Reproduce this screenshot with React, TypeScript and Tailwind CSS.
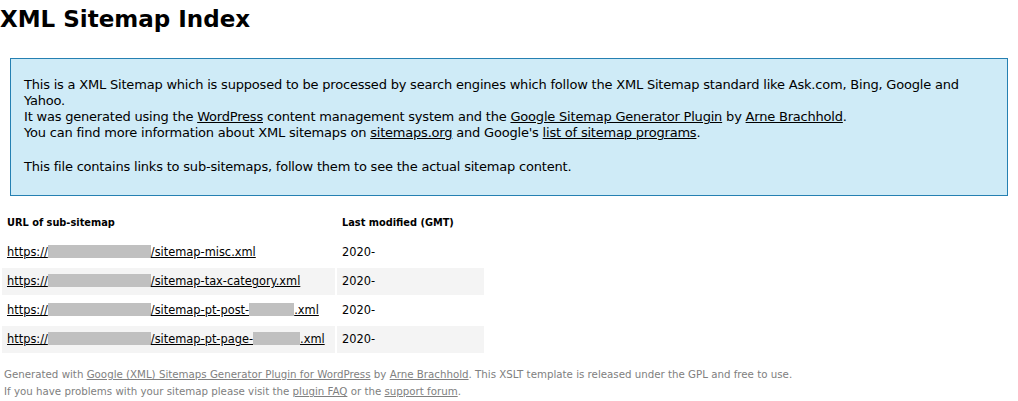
const rows = [
  { mid: '/sitemap-misc.xml', tail: null as null | number, end: '', date: '2020-' },
  { mid: '/sitemap-tax-category.xml', tail: null, end: '', date: '2020-' },
  { mid: '/sitemap-pt-post-', tail: 45, end: '.xml', date: '2020-' },
  { mid: '/sitemap-pt-page-', tail: 47, end: '.xml', date: '2020-' },
];

function Blur({ w }: { w: number }) {
  return <span className="inline-block h-[13px] bg-[#c0c0c0] align-[-2px]" style={{ width: w }} />;
}

export default function App() {
  return (
    <div className="min-h-screen bg-white text-black font-['DejaVu_Sans',sans-serif]">
      <h1 className="text-[23px] font-bold leading-[38px] m-0">XML Sitemap Index</h1>

      {/* Intro box */}
      <div className="mx-[10px] mt-[20px] border border-[#2580B2] bg-[#CFEBF7] px-[13px] py-[5px] text-[13px] tracking-[-0.2px]">
        <p className="mt-[13px] mb-[14px] leading-[16px]">
          This is a XML Sitemap which is supposed to be processed by search engines which follow the XML Sitemap
          standard like Ask.com, Bing, Google and Yahoo.
          <br />
          It was generated using the <a href="#" className="underline">WordPress</a> content management system and the{' '}
          <a href="#" className="underline">Google Sitemap Generator Plugin</a> by{' '}
          <a href="#" className="underline">Arne Brachhold</a>.
          <br />
          You can find more information about XML sitemaps on <a href="#" className="underline">sitemaps.org</a> and
          Google's <a href="#" className="underline">list of sitemap programs</a>.
        </p>
        <p className="mt-[18px] mb-[15px] leading-[16px]">
          This file contains links to sub-sitemaps, follow them to see the actual sitemap content.
        </p>
      </div>

      {/* Sub-sitemap table */}
      <table className="mt-[12px] border-separate border-spacing-[2px] text-[11.4px]">
        <thead>
          <tr className="h-[27px]">
            <th className="w-[333px] px-[5px] text-left text-[9.8px] font-bold">URL of sub-sitemap</th>
            <th className="pl-[5px] pr-[30px] text-left text-[9.8px] font-bold whitespace-nowrap">Last modified (GMT)</th>
          </tr>
        </thead>
        <tbody>
          {rows.map((r, i) => (
            <tr key={i} className={i % 2 === 1 ? 'h-[27px] bg-[#f4f4f4]' : 'h-[27px]'}>
              <td className="px-[5px]">
                <a href="#" className="underline whitespace-nowrap">
                  https://
                  <Blur w={103} />
                  {r.mid}
                  {r.tail !== null && <Blur w={r.tail} />}
                  {r.end}
                </a>
              </td>
              <td className="px-[5px]">{r.date}</td>
            </tr>
          ))}
        </tbody>
      </table>

      {/* Footer */}
      <div className="mt-[9px] p-[2px] text-[10.25px] text-[#808080]">
        <p className="mx-[2px] leading-[17px]">
          Generated with <a href="#" className="underline">Google (XML) Sitemaps Generator Plugin for WordPress</a> by{' '}
          <a href="#" className="underline">Arne Brachhold</a>. This XSLT template is released under the GPL and free to
          use.
        </p>
        <p className="mx-[2px] leading-[17px]">
          If you have problems with your sitemap please visit the <a href="#" className="underline">plugin FAQ</a> or the{' '}
          <a href="#" className="underline">support forum</a>.
        </p>
      </div>
    </div>
  );
}
